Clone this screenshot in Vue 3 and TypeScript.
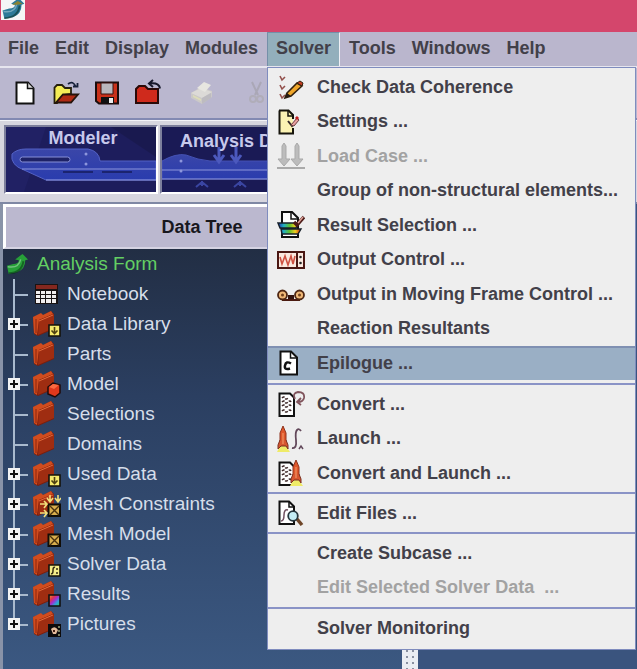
<script setup lang="ts">
interface MenuItem {
  label: string
  icon?: string
  disabled?: boolean
  active?: boolean
}

interface TreeNode {
  label: string
  icon?: string
  badge?: string
  expandable?: boolean
}

const menusBefore: string[] = ['File', 'Edit', 'Display', 'Modules']
const menusAfter: string[] = ['Tools', 'Windows', 'Help']

const solverGroups: MenuItem[][] = [
  [
    { label: 'Check Data Coherence', icon: 'check' },
    { label: 'Settings ...', icon: 'settings' },
    { label: 'Load Case ...', icon: 'load', disabled: true },
    { label: 'Group of non-structural elements...' },
    { label: 'Result Selection ...', icon: 'result' },
    { label: 'Output Control ...', icon: 'output' },
    { label: 'Output in Moving Frame Control ...', icon: 'frame' },
    { label: 'Reaction Resultants' },
    { label: 'Epilogue ...', icon: 'epilogue', active: true },
  ],
  [
    { label: 'Convert ...', icon: 'convert' },
    { label: 'Launch ...', icon: 'launch' },
    { label: 'Convert and Launch ...', icon: 'convert-launch' },
  ],
  [{ label: 'Edit Files ...', icon: 'edit-files' }],
  [
    { label: 'Create Subcase ...' },
    { label: 'Edit Selected Solver Data\u00a0 ...', disabled: true },
  ],
  [{ label: 'Solver Monitoring' }],
]

const fileTools = [
  { id: 'new', label: 'New' },
  { id: 'open', label: 'Open' },
  { id: 'save', label: 'Save' },
  { id: 'back', label: 'Parent folder' },
]

const nodes: TreeNode[] = [
  { label: 'Notebook', icon: 'notebook' },
  { label: 'Data Library', badge: 'b-down', expandable: true },
  { label: 'Parts' },
  { label: 'Model', badge: 'b-cube', expandable: true },
  { label: 'Selections' },
  { label: 'Domains' },
  { label: 'Used Data', badge: 'b-down', expandable: true },
  { label: 'Mesh Constraints', badge: 'b-constraint', expandable: true },
  { label: 'Mesh Model', badge: 'b-mesh', expandable: true },
  { label: 'Solver Data', badge: 'b-solver', expandable: true },
  { label: 'Results', badge: 'b-results', expandable: true },
  { label: 'Pictures', badge: 'b-picture', expandable: true },
]
</script>

<template>
  <svg class="defs" aria-hidden="true">
    <defs>
      <linearGradient id="rainbow" x1="0" y1="0" x2="1" y2="0">
        <stop offset="0" stop-color="#2030b0" />
        <stop offset=".25" stop-color="#20b0c0" />
        <stop offset=".5" stop-color="#60c030" />
        <stop offset=".75" stop-color="#f0d020" />
        <stop offset="1" stop-color="#d02010" />
      </linearGradient>
      <linearGradient id="spectrum" x1="0" y1="0" x2="1" y2="1">
        <stop offset="0" stop-color="#f0a020" />
        <stop offset=".3" stop-color="#e03050" />
        <stop offset=".5" stop-color="#a030d0" />
        <stop offset=".7" stop-color="#30a0e0" />
        <stop offset="1" stop-color="#30d050" />
      </linearGradient>
      <linearGradient id="plate" x1="0" y1="0" x2="0" y2="1">
        <stop offset="0" stop-color="#3a46a8" />
        <stop offset="1" stop-color="#2a3cae" />
      </linearGradient>
    </defs>

    <symbol id="new" viewBox="0 0 28 28">
      <path d="M5.500 3.500H17l5.500 6V24.500H5.500Z" fill="#fff" stroke="#111" stroke-width="2" />
      <path d="M16.500 3.500V9.500H22.500" fill="#ddd" stroke="#111" stroke-width="1.500" />
    </symbol>
    <symbol id="open" viewBox="0 0 28 28">
      <path d="M2.500 22V8.500L5 6h5l3 3h6v6l-8 1-6 8H2.500Z" fill="#f5ec56" stroke="#26200c" stroke-width="1.800" />
      <path d="M4 23.500 11 15.500H26L19 23.500Z" fill="#b02a14" stroke="#26140c" stroke-width="1.800" />
      <path d="M16 5q5-4 8 3M21 7.500h4.500V4" fill="none" stroke="#16203a" stroke-width="1.800" />
    </symbol>
    <symbol id="save" viewBox="0 0 28 28">
      <path d="M3 3.500H25V24.500H6L3 22Z" fill="#c9311a" stroke="#1a0d0d" stroke-width="2" />
      <path d="M8 4h12v11H8Z" fill="#b9b7bd" stroke="#3a1210" />
      <path d="M8 18h13v6H8Z" fill="#111" /><path d="M16 19h4v5h-4Z" fill="#eee" />
    </symbol>
    <symbol id="back" viewBox="0 0 28 28">
      <path d="M2 24V10l3-3h6l3 3h10v14Z" fill="#cf2a1c" stroke="#2a0a08" stroke-width="2" />
      <path d="M26 9.500Q25 3.500 16 4.500M19 1l-4 3.500 4 3.500" fill="none" stroke="#16182a" stroke-width="2" />
    </symbol>
    <symbol id="print" viewBox="0 0 28 28">
      <path d="M2 14 12 8l11 4v6L13 25 2 19Z" fill="#cbc9c8" />
      <path d="M2 14 12 9l11 4-10 6Z" fill="#dcdad7" />
      <path d="M8 9 15 3l7 3-6 7Z" fill="#e7e6e0" />
      <path d="M13 19v6l9-6v-5Z" fill="#bdbbc0" /><path d="m4 16 8 4v2l-8-4Z" fill="#dcdcb8" />
    </symbol>
    <symbol id="cut" viewBox="0 0 28 28">
      <path d="M8 3l6 13M17 3l-6 13" stroke="#aaa7b6" stroke-width="2" />
      <circle cx="9" cy="20" r="3" fill="none" stroke="#b0adb9" stroke-width="2" />
      <circle cx="16" cy="20" r="3" fill="none" stroke="#b0adb9" stroke-width="2" />
    </symbol>

    <symbol id="arrow-logo" viewBox="0 0 24 24">
      <path d="M1 14 8 12Q14 12 14 8L10 7 18 1l6 6-3 1Q21 18 12 21L3 23Z" fill="currentColor" />
      <path d="M2 15q12 2 14-8" fill="none" stroke="#fff" stroke-opacity=".35" stroke-width="1.500" />
      <path d="M3 22q14 0 16-13" fill="none" stroke="#00200a" stroke-opacity=".45" stroke-width="2" />
    </symbol>

    <symbol id="check" viewBox="0 0 28 28">
      <path d="m3 3 2 4 3-3M3 12l2 4 3-3M3 21l2 4 3-3" fill="none" stroke="#93504c" stroke-width="1.600" />
      <path d="m10 20 10-10 5 3-11 10-6 2Z" fill="#efa62a" stroke="#33210e" stroke-width="1.600" />
      <path d="m20 10 3-2 3 2-1 3Z" fill="#c43c20" stroke="#33210e" />
      <path d="M8 25l2-5 4 3Z" fill="#241a12" />
    </symbol>
    <symbol id="settings" viewBox="0 0 28 28">
      <path d="M2.500 2.500H11.500L16 7V25.500H2.500Z" fill="#fbf3b4" />
      <path d="M2 2.500H11.500L16 7V11M16 20v5.500H2.500V2.500" fill="none" stroke="#16140c" stroke-width="2" />
      <path d="M11 3v5h5" fill="none" stroke="#16140c" stroke-width="1.500" />
      <path d="m11 13 4 5 5-6" fill="none" stroke="#33282a" stroke-width="2" />
      <path d="m14 17 6-7 2 2-5 6Z" fill="#e8a0a0" stroke="#704040" />
      <path d="m19 11 2-2" stroke="#c02020" stroke-width="3" />
    </symbol>
    <symbol id="load" viewBox="0 0 28 28">
      <path d="M7 1l2 3v13h4l-6 7-6-7h4V4ZM20 1l2 3v13h4l-6 7-6-7h4V4Z" fill="#bcbcbc" stroke="#a9a9a9" />
      <path d="M0 26H28" stroke="#aaa" stroke-width="2" />
    </symbol>
    <symbol id="result" viewBox="0 0 28 28">
      <path d="M5 1h10l6 6v19H5Z" fill="#fff" stroke="#111" stroke-width="2" />
      <path d="M14 1v7h7" fill="none" stroke="#111" stroke-width="1.500" />
      <path d="M1 12h20l-2 5H3ZM4 18h20l-3 5H5Z" fill="url(#rainbow)" stroke="#16202a" stroke-width="1.400" />
      <path d="m17 11 3 3 7-8" fill="none" stroke="#4d1c18" stroke-width="3.500" />
      <path d="m21 12 5-6" stroke="#e0a39a" stroke-width="1.500" />
    </symbol>
    <symbol id="output" viewBox="0 0 28 28">
      <path d="M1 6H27V22H1Z" fill="#fbe9df" stroke="#4a1712" stroke-width="2" />
      <path d="M3 11 5 18 8 10l3 9 3-9 2 8 2-8" fill="none" stroke="#cf5141" stroke-width="1.600" />
      <path d="M20 6v16" stroke="#4a1712" stroke-width="2" />
      <circle cx="23.500" cy="11" r="1.300" fill="#222" /><circle cx="23.500" cy="17" r="1.300" fill="#222" />
    </symbol>
    <symbol id="frame" viewBox="0 0 28 28">
      <path d="M5 20h18" stroke="#4a1a10" stroke-width="2" />
      <circle cx="5.500" cy="15" r="4.500" fill="#efb877" stroke="#4e2713" stroke-width="1.800" />
      <circle cx="22.500" cy="15" r="4.500" fill="#efb877" stroke="#4e2713" stroke-width="1.800" />
      <circle cx="5.500" cy="15" r="1.500" fill="#70401c" /><circle cx="22.500" cy="15" r="1.500" fill="#70401c" />
      <path d="M11 15h6v4h-6Z" fill="#33130e" />
    </symbol>
    <symbol id="epilogue" viewBox="0 0 28 28">
      <path d="M3.500 2.500H14l6 6V25.500H3.500Z" fill="#fff" stroke="#111" stroke-width="2" />
      <path d="M13.500 3v6h6" fill="none" stroke="#111" stroke-width="1.500" />
      <path d="M14 14.500q-5-3-6 2t5 3" fill="none" stroke="#111" stroke-width="2.500" />
    </symbol>
    <symbol id="sheet" viewBox="0 0 28 28">
      <path d="M2.500 3.500H13l4 4V26H2.500Z" fill="#fff" stroke="#111" stroke-width="2" />
      <path d="M5 8q2-2 3 0t3 0M5 12q2-2 3 0t3 0 3 0M5 16q2-2 3 0t3 0 3 0M5 21q2-2 3 0t3 0 3 0" fill="none" stroke="#3c2626" stroke-width="1.600" stroke-dasharray="3 1" />
    </symbol>
    <symbol id="convert" viewBox="0 0 28 28">
      <use href="#sheet" />
      <path d="M18 9Q15 3 21 2q7 0 6 6-1 4-6 4M24 8l-4 4 4 3" fill="none" stroke="#80545c" stroke-width="1.800" />
    </symbol>
    <symbol id="rocket" viewBox="0 0 28 28">
      <path d="M0 27 3 21h6l4 6Z" fill="#efeb68" />
      <path d="M3 8 6 1l3 7v12H3Z" fill="#df572b" stroke="#8e321c" />
      <path d="m3 15-2 5v4l3-3h5l2 3v-4l-2-5" fill="#d7552f" stroke="#7a3020" />
      <path d="M6 8v11" stroke="#f4a06f" />
    </symbol>
    <symbol id="launch" viewBox="0 0 28 28">
      <use href="#rocket" />
      <path d="M24 6q-2-3-4-1-2 2-1 10 1 9-4 8" fill="none" stroke="#62485a" stroke-width="1.800" />
      <path d="m22 24 2-3 2 3" fill="none" stroke="#62485a" stroke-width="1.500" />
    </symbol>
    <symbol id="convert-launch" viewBox="0 0 28 28">
      <use href="#sheet" /><use href="#rocket" x="13" y="0" width="28" height="28" />
    </symbol>
    <symbol id="edit-files" viewBox="0 0 28 28">
      <path d="M2.500 2.500H12l5 5V25H2.500Z" fill="#fff" stroke="#111" stroke-width="2" />
      <path d="M12 3v5h5" fill="none" stroke="#111" stroke-width="1.500" />
      <path d="M11 11q-4-1-4 5t-3 6" fill="none" stroke="#705060" stroke-width="1.500" />
      <path d="m20 20 5 6" stroke="#6e4528" stroke-width="3.500" />
      <circle cx="16" cy="17" r="4.800" fill="#c5edf5" stroke="#26353c" stroke-width="1.800" />
    </symbol>

    <symbol id="notebook" viewBox="0 0 28 28">
      <path d="M2 4H25V24H2Z" fill="#191313" /><path d="M3 5H24V9H3Z" fill="#84281f" />
      <path d="M3 11h4v3H3ZM8 11h4v3H8ZM13 11h5v3h-5ZM19 11h4v3h-4ZM3 15h4v3H3ZM8 15h4v3H8ZM13 15h5v3h-5ZM19 15h4v3h-4ZM3 19h4v4H3ZM8 19h4v4H8ZM13 19h5v4h-5ZM19 19h4v4h-4Z" fill="#f2efef" />
    </symbol>
    <symbol id="folder" viewBox="0 0 28 28">
      <path d="M0 7 8 4l2 1 8-4 3 3v15L5 26 1 24Z" fill="#7c1e0c" />
      <path d="M0 7 8 3l2 2 8-4 2 3L6 10l-2 15-3-2Z" fill="#d04c1e" />
      <path d="M6 10 21 4v14L5 25Z" fill="#9f2d11" />
      <path d="M6 11 20 5" stroke="#e2693a" />
      <path d="M3 9v14" stroke="#8a240e" />
    </symbol>
    <symbol id="b-down" viewBox="0 0 28 28">
      <path d="M16 15H27V26H16Z" fill="#f4e96c" stroke="#15120a" stroke-width="1.600" />
      <path d="M21.500 17v6M18.500 20.500l3 3 3-3" fill="none" stroke="#4c3f12" stroke-width="1.600" />
    </symbol>
    <symbol id="b-cube" viewBox="0 0 28 28">
      <path d="m15 17 5-4 7 2v8l-5 4-7-3Z" fill="#e0381c" stroke="#1f0a08" stroke-width="1.500" />
      <path d="m16 17 5 2 5-4-6-1Z" fill="#fa6a40" />
    </symbol>
    <symbol id="b-mesh" viewBox="0 0 28 28">
      <path d="M15.500 14.500H27V26H15.500Z" fill="#d9ae4d" stroke="#110d07" stroke-width="2" />
      <path d="m17 16 9 9M26 16l-9 9" stroke="#49320f" stroke-width="1.400" />
    </symbol>
    <symbol id="b-constraint" viewBox="0 0 28 28">
      <use href="#b-mesh" />
      <path d="M17 5v6M14 8l3 4 3-4M25 5v6M22 8l3 4 3-4M7 14h6M11 11l3 3-3 4M7 23h6M11 20l3 3-3 4" fill="none" stroke="#f3e07b" stroke-width="1.600" />
    </symbol>
    <symbol id="b-solver" viewBox="0 0 28 28">
      <path d="M16 15H27V26H16Z" fill="#f4ed8a" stroke="#15120a" stroke-width="1.600" />
      <path d="M22 17.500q-2-1-2 3t-2 3M24 18v2M24 22v2" fill="none" stroke="#342c14" stroke-width="1.500" />
    </symbol>
    <symbol id="b-results" viewBox="0 0 28 28">
      <path d="M16 15H27V26H16Z" fill="url(#spectrum)" stroke="#111" stroke-width="1.600" />
    </symbol>
    <symbol id="b-picture" viewBox="0 0 28 28">
      <path d="M15 14H28V27H15Z" fill="#0d0b0b" />
      <path d="M18 19q4-4 7 1l-2 4h-3Z" fill="#e4bc9c" />
      <path d="M20 20h2v2h-2Z" fill="#442016" /><path d="M26 16v2M26 20v2M26 24v2" stroke="#9ca47c" stroke-width="1.500" />
    </symbol>
  </svg>

  <div class="window">
    <header class="title-bar">
      <svg class="app-logo" viewBox="0 3 24 21" aria-hidden="true">
        <use href="#arrow-logo" width="24" height="24" />
        <path d="m11 8 6-4 5 3-5 1Z" fill="#8a8332" />
      </svg>
    </header>

    <nav class="menu-bar" aria-label="Main menu">
      <button v-for="name in menusBefore" :key="name" type="button" class="menu-button">{{ name }}</button>
      <div class="menu-host">
        <button type="button" class="menu-button open" aria-expanded="true">Solver</button>
        <div class="popup">
          <ul v-for="(group, g) in solverGroups" :key="g" class="group">
            <li v-for="item in group" :key="item.label" class="row">
              <button type="button" class="item" :class="{ active: item.active }" :disabled="item.disabled">
                <svg class="icon" viewBox="0 0 28 28" aria-hidden="true">
                  <use v-if="item.icon" :href="'#' + item.icon" />
                </svg>
                <span>{{ item.label }}</span>
              </button>
            </li>
          </ul>
        </div>
      </div>
      <button v-for="name in menusAfter" :key="name" type="button" class="menu-button">{{ name }}</button>
    </nav>

    <div class="toolbar">
      <button v-for="tool in fileTools" :key="tool.id" type="button" class="tool" :aria-label="tool.label">
        <svg class="icon" aria-hidden="true"><use :href="'#' + tool.id" /></svg>
      </button>
      <button type="button" class="tool apart" disabled aria-label="Print">
        <svg class="icon" aria-hidden="true"><use href="#print" /></svg>
      </button>
      <button type="button" class="tool apart" disabled aria-label="Cut">
        <svg class="icon" aria-hidden="true"><use href="#cut" /></svg>
      </button>
    </div>

    <div class="modules">
      <button type="button" class="module">
        <svg class="art" viewBox="0 0 150 65" preserveAspectRatio="none" aria-hidden="true">
          <rect width="150" height="65" fill="#1d1d5c" />
          <path d="M0 0H40L18 65H0Z" fill="#212164" /><path d="M105 0 150 30V0Z" fill="#19194f" />
          <path d="M6 27q5-5 14-5H82q11 2 12 12H150V53H40L18 43Q4 38 6 27Z" fill="url(#plate)" stroke="#5361c4" />
          <rect x="14" y="30" width="50" height="5" rx="2.500" fill="#1e2266" stroke="#8790d8" />
          <path d="M16 42H150M40 53H150" stroke="#8d96dc" />
          <path d="M57 45h30M96 45h30" stroke="#1b2470" stroke-width="2" />
          <circle cx="80" cy="27" r="1.500" fill="#8d96dc" /><circle cx="80" cy="37" r="1.500" fill="#8d96dc" />
        </svg>
        <span class="module-name">Modeler</span>
      </button>
      <button type="button" class="module">
        <svg class="art" viewBox="0 0 150 65" preserveAspectRatio="none" aria-hidden="true">
          <rect width="150" height="65" fill="#1a1a55" />
          <path d="M0 34Q14 26 24 28q12 5 24 6H150V52H0Z" fill="url(#plate)" stroke="#4451b4" />
          <path d="M0 43H150M0 52H150" stroke="#8d96dc" />
          <path d="M57 20v14M52 28l5 7 5-7M74 20v14M69 28l5 7 5-7" fill="none" stroke="#4c59bd" stroke-width="3" />
          <path d="M40 54v5M34 60l6-5 6 5M78 54v5M72 60l6-5 6 5" fill="none" stroke="#3a45a2" stroke-width="2" />
          <circle cx="19" cy="34" r="1.500" fill="#8d96dc" /><circle cx="19" cy="44" r="1.500" fill="#8d96dc" />
        </svg>
        <span class="module-name">Analysis Data</span>
      </button>
    </div>

    <main class="workspace">
      <section class="tree-pane">
        <h2 class="tree-title">Data Tree</h2>
        <div class="tree">
          <div class="root">
            <svg class="root-icon" aria-hidden="true"><use href="#arrow-logo" /></svg>
            <span>Analysis Form</span>
          </div>
          <ul class="nodes">
            <li v-for="node in nodes" :key="node.label" class="node">
              <span class="branch">
                <button v-if="node.expandable" type="button" class="expander" :aria-label="'Expand ' + node.label">
                  <svg class="plus" viewBox="0 0 12 12" aria-hidden="true"><path d="M6 2v8M2 6h8" stroke="#111" stroke-width="2" /></svg>
                </button>
              </span>
              <svg class="node-icon" viewBox="0 0 28 28" aria-hidden="true">
                <use :href="'#' + (node.icon ?? 'folder')" />
                <use v-if="node.badge" :href="'#' + node.badge" />
              </svg>
              <span>{{ node.label }}</span>
            </li>
          </ul>
        </div>
      </section>
      <div class="splitter"></div>
      <section class="view"></section>
    </main>
  </div>
</template>

<style>
body {
  margin: 0;
}
</style>

<style scoped>
.defs {
  position: absolute;
  width: 0;
  height: 0;
}

.window {
  display: flex;
  flex-direction: column;
  min-height: 100vh;
  overflow: hidden;
  background: #bab7cf;
  font-family: "Liberation Sans", Arial, sans-serif;
  font-size: 18px;
  color: #424049;
}

button {
  margin: 0;
  padding: 0;
  border: 0;
  background: none;
  color: inherit;
  font: inherit;
}

ul {
  margin: 0;
  padding: 0;
  list-style: none;
}

.icon {
  display: block;
  flex: none;
  width: 28px;
  height: 28px;
}

.title-bar {
  height: 32px;
  background: #d4466c;
}

.app-logo {
  display: block;
  box-sizing: border-box;
  width: 24px;
  height: 20px;
  margin-left: 1px;
  background: #f4f6f6;
  color: #2c7a98;
}

.menu-bar {
  display: flex;
  height: 34px;
  border-bottom: 2px solid #e6e5ee;
  background: #bab6cd;
  font-weight: bold;
}

.menu-button {
  padding: 0 8px 2px;
}

.menu-host {
  position: relative;
  display: flex;
  margin: 0 1px;
}

.menu-button.open {
  border: 1px solid #748fa8;
  border-right-color: #f0f0f6;
  border-bottom: 0;
  background: #93afbc;
}

.popup {
  position: absolute;
  z-index: 2;
  top: 100%;
  left: 0;
  box-sizing: border-box;
  min-width: 369px;
  margin-top: 1px;
  padding: 2px 0 4px;
  border: 1px solid #7f8cbe;
  background: #eee;
  white-space: nowrap;
}

.group + .group {
  margin-top: 2px;
  padding-top: 2px;
  border-top: 2px solid #8a93c6;
}

.group:first-child {
  padding-bottom: 1px;
}

.row {
  height: 34px;
}

.row:nth-child(even) {
  height: 35px;
}

.item {
  display: flex;
  align-items: center;
  gap: 12px;
  box-sizing: border-box;
  width: 100%;
  height: 100%;
  padding: 0 12px 0 9px;
  text-align: left;
}

.item:disabled {
  color: #a2a2a2;
}

.item.active {
  border-top: 2px solid #7f90b2;
  padding-bottom: 2px;
  background: #9aafc5;
}

.toolbar {
  display: flex;
  align-items: center;
  gap: 13px;
  height: 50px;
  padding-left: 11px;
  border-bottom: 2px solid #8289b2;
}

.apart {
  margin-left: 14px;
}

.modules {
  display: flex;
  gap: 2px;
  padding: 4px 4px 8px;
  border-top: 1px solid #f4f4f8;
  background: #d7d6df;
}

.module {
  display: grid;
  border: 2px solid #7d7f9c;
  border-right-color: #fff;
  border-bottom-color: #fff;
}

.art {
  grid-area: 1 / 1;
  width: 150px;
  height: 65px;
}

.module-name {
  grid-area: 1 / 1;
  padding: 1px 0 0 4px;
  color: #c7c9ec;
  font-size: 18px;
  font-weight: bold;
  line-height: 20px;
}

.module + .module .module-name {
  padding-top: 4px;
}

.workspace {
  display: flex;
  flex: 1;
  border-top: 2px solid #7f88a4;
}

.tree-pane {
  display: flex;
  flex-direction: column;
  flex: 0 0 399px;
  border-left: 3px solid #8993a8;
}

.tree-title {
  box-sizing: border-box;
  height: 45px;
  margin: 0;
  padding-right: 4px;
  border: 3px solid #fff;
  border-right: 0;
  border-bottom: 2px solid #d5d3e2;
  background: #bbb8cf;
  color: #18171d;
  font-size: 18px;
  line-height: 40px;
  text-align: center;
}

.tree {
  flex: 1;
  background: linear-gradient(#222e44, #2b3f61 35%, #3b5881);
  color: #d6deea;
  font-size: 19px;
}

.root {
  display: flex;
  align-items: center;
  gap: 9px;
  height: 30px;
  padding-left: 3px;
  color: #63cf63;
}

.root-icon {
  width: 22px;
  height: 24px;
  color: #27a038;
}

.node {
  display: flex;
  align-items: center;
  height: 30px;
}

.branch {
  display: flex;
  align-items: center;
  box-sizing: border-box;
  width: 30px;
  height: 30px;
  padding-left: 5px;
  background:
    linear-gradient(#a9bace, #a9bace) 10px 0 / 2px 100% no-repeat,
    linear-gradient(#a9bace, #a9bace) 10px 15px / 15px 2px no-repeat;
}

.node:last-child .branch {
  background-size: 2px 15px, 15px 2px;
}

.expander {
  width: 12px;
  height: 12px;
  background: #f3f3f3;
}

.plus {
  display: block;
  width: 12px;
  height: 12px;
}

.node-icon {
  width: 28px;
  height: 28px;
  margin-right: 6px;
}

.splitter {
  width: 16px;
  background:
    radial-gradient(circle, #8890a0 1px, transparent 1px) 8px 0 / 6px 6px,
    #e9edf2;
}

.view {
  flex: 1;
  background: #3a547e;
}
</style>
